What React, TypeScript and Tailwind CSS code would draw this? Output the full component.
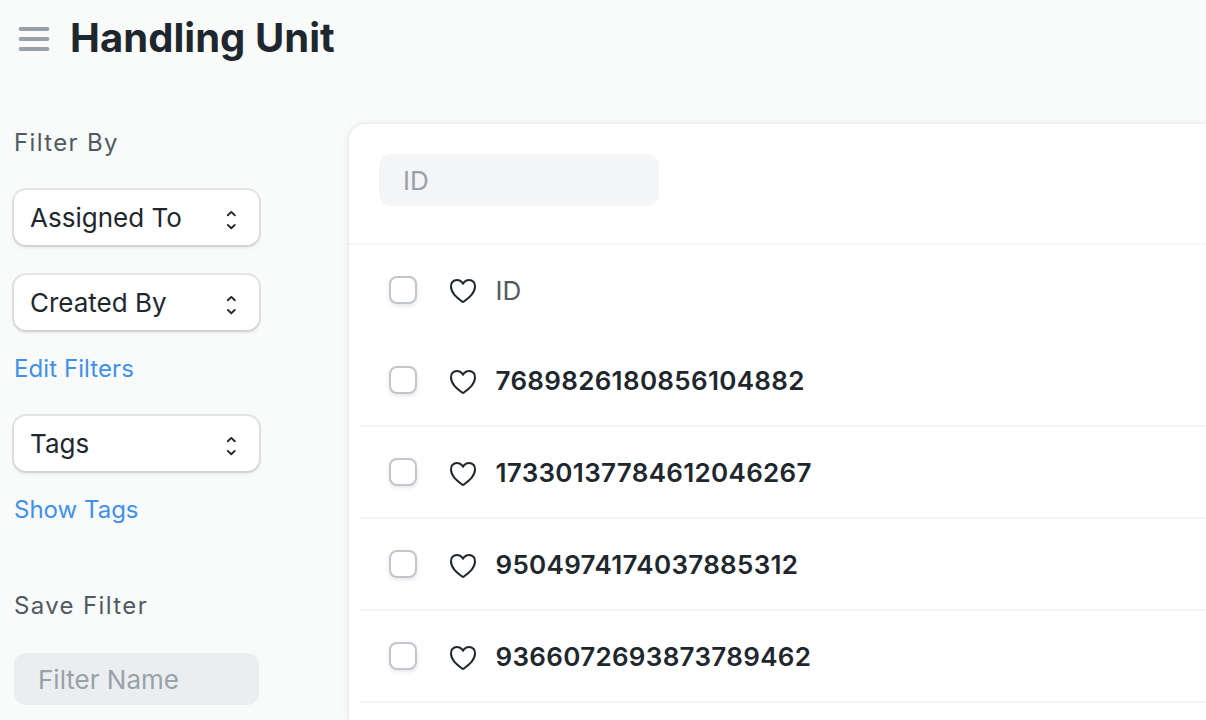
import React from "react";

const ids = [
  "7689826180856104882",
  "17330137784612046267",
  "9504974174037885312",
  "9366072693873789462",
];

function HeartIcon({ className = "" }: { className?: string }) {
  return (
    <svg className={`size-8 shrink-0 ${className}`} viewBox="0 0 16 16" fill="none" stroke="#1f272e">
      <path d="M7.606 3.799L8 4.302l.394-.503.106-.14c.048-.065.08-.108.129-.159a3.284 3.284 0 0 1 4.72 0c.424.434.655 1.245.65 2.278-.006 1.578-.685 2.931-1.728 4.159-1.05 1.234-2.439 2.308-3.814 3.328a.763.763 0 0 1-.914 0c-1.375-1.02-2.764-2.094-3.814-3.328C2.686 8.709 2.007 7.357 2 5.778c-.004-1.033.227-1.844.651-2.278a3.284 3.284 0 0 1 4.72 0c.05.05.081.094.129.158.028.038.061.083.106.14z" />
    </svg>
  );
}

function Checkbox() {
  return (
    <span
      role="checkbox"
      aria-checked="false"
      className="size-7 shrink-0 rounded-[8px] border-2 border-[#c0c6cc] bg-white shadow-[0_2px_4px_rgba(0,0,0,0.1)]"
    />
  );
}

function SelectButton({ label }: { label: string }) {
  return (
    <button className="flex h-[55px] w-[245px] items-center justify-between rounded-[12px] bg-white pr-[22px] pl-4 text-[26px] leading-9 text-[#1f272e] shadow-[0_0_0_2px_rgba(0,0,0,0.08),0_2px_4px_rgba(0,0,0,0.12)]">
      <span className="pt-px">{label}</span>
      <svg className="mt-[5px] h-6 w-3" viewBox="0 0 12 24" fill="none" stroke="#1f272e" strokeWidth="1.9" strokeLinecap="round" strokeLinejoin="round">
        <path d="M2.8 7.3L6.300 3.900l3.500 3.400M2.800 16.900l3.500 3.400 3.500-3.400" />
      </svg>
    </button>
  );
}

export default function App() {
  return (
    <div className="flex h-[720px] w-[1206px] flex-col overflow-hidden bg-[#f9fafa] font-['Inter',sans-serif] text-[#1f272e]">
      <header className="flex h-[76px] shrink-0 items-center pl-[18px]">
        <svg className="h-8 w-8 shrink-0" viewBox="0 0 32 32" stroke="#98a1a9" strokeWidth="3.8" strokeLinecap="round">
          <path d="M2.5 7h27M2.5 17h27M2.5 27h27" />
        </svg>
        <h1 className="pl-5 text-[40px] leading-[60px] font-bold tracking-[0.04px] whitespace-nowrap">Handling Unit</h1>
      </header>

      <div className="flex min-h-0 flex-1">
        <aside className="flex w-[349px] shrink-0 flex-col items-start pt-[49px] pl-3.5">
          <h2 className="h-9 text-[24px] leading-9 tracking-[1.36px] text-[#505a62]">Filter By</h2>
          <div className="mt-[29px] flex flex-col gap-[30px]">
            <SelectButton label="Assigned To" />
            <SelectButton label="Created By" />
          </div>
          <a className="mt-[21px] h-9 text-[24px] leading-9 tracking-[0.08px] text-[#4191e8]">Edit Filters</a>
          <div className="mt-[29px]">
            <SelectButton label="Tags" />
          </div>
          <a className="mt-[21px] h-9 text-[24px] leading-9 text-[#4191e8]">Show Tags</a>
          <h2 className="mt-[60px] h-9 text-[24px] leading-9 tracking-[1.36px] text-[#505a62]">Save Filter</h2>
          <div className="mt-[29px] flex h-[52px] w-[245px] shrink-0 items-center rounded-[12px] bg-[#ebeef0] pl-6 text-[26px] text-[#98a1a9]">
            Filter Name
          </div>
        </aside>

        <main className="mt-12 flex-1 rounded-tl-[16px] bg-white shadow-[0_0_2px_rgba(25,39,52,0.1),0_1px_8px_rgba(25,39,52,0.1)]">
          <div className="h-[121px] border-b-2 border-[#f4f5f6] pt-[30px] pl-[30px]">
            <div className="flex h-[52px] w-[280px] items-center rounded-[12px] bg-[#f4f5f6] pl-6 text-[26px] text-[#98a1a9]">
              ID
            </div>
          </div>
          <div className="pl-2.5">
            <div className="flex h-[90px] items-center pl-[30px]">
              <Checkbox />
              <HeartIcon className="mt-0.5 ml-[30px]" />
              <span className="pl-[16.5px] text-[26px] text-[#505a62]">ID</span>
            </div>
            {ids.map((id) => (
              <div key={id} className="flex h-[92px] items-center border-b-2 border-[#f4f5f6] pl-[30px]">
                <Checkbox />
                <HeartIcon className="mt-1 ml-[30px]" />
                <span className="pl-[16.5px] text-[26px] font-semibold tracking-[0.31px]">{id}</span>
              </div>
            ))}
          </div>
        </main>
      </div>
    </div>
  );
}
